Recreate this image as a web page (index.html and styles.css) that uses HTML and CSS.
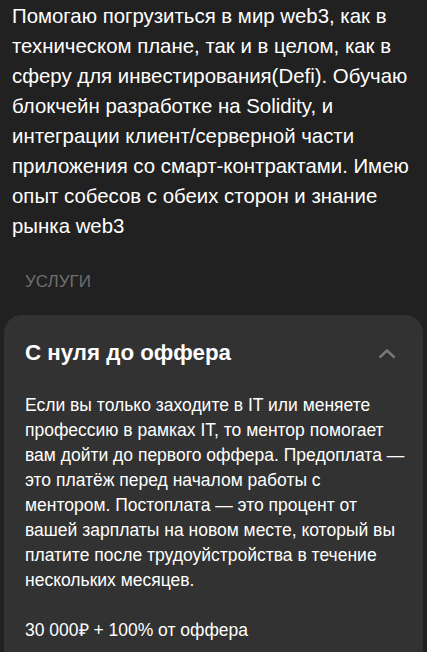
FILE: index.html
```html
<!DOCTYPE html>
<html lang="ru">

<head>
    <meta charset="UTF-8">
    <meta name="viewport" content="width=device-width, initial-scale=1.0">
    <title>Ментор web3</title>
    <link rel="stylesheet" href="styles.css">
</head>

<body>
    <section class="about">
        <p>Помогаю погрузиться в мир web3, как в техническом плане, так и в целом, как в сферу для инвестирования(Defi). Обучаю блокчейн разработке на Solidity, и интеграции клиент/серверной части приложения со смарт-контрактами. Имею опыт собесов с обеих сторон и знание рынка web3</p>
    </section>

    <h2 class="section-title">Услуги</h2>

    <div class="service-card">
        <div class="service-header">
            <h3>С нуля до оффера</h3>
            <svg class="chevron" width="18" height="11" viewBox="0 0 18 11">
                <polyline points="1.5,9.5 9,2.5 16.5,9.5" fill="none" stroke="#787878" stroke-width="2.4" />
            </svg>
        </div>
        <p class="service-text">Если вы только заходите в IT или меняете профессию в рамках IT, то ментор помогает вам дойти до первого оффера. Предоплата — это платёж перед началом работы с ментором. Постоплата — это процент от вашей зарплаты на новом месте, который вы платите после трудоуйстройства в течение нескольких месяцев.</p>
        <p class="service-price">30 000₽ + 100% от оффера</p>
    </div>
</body>

</html>
```

FILE: styles.css
```css
/* General Styles */
body {
    margin: 0;
    font-family: 'Liberation Sans', Arial, sans-serif;
    background-color: #212121;
    color: #FFFFFF;
}

/* About */
.about {
    padding: 1px 12px 0;
}

.about p {
    margin: 0;
    font-size: 20.4px;
    line-height: 30px;
}

/* Section title */
.section-title {
    margin: 31px 0 0;
    padding: 0 25px;
    font-size: 17px;
    font-weight: normal;
    text-transform: uppercase;
    color: #6E6E6E;
}

/* Service card */
.service-card {
    margin: 23px 4px 0;
    padding: 20px 21px 40px;
    background-color: #323232;
    border-radius: 18px;
}

.service-header {
    display: flex;
    justify-content: space-between;
    align-items: center;
}

.service-header h3 {
    margin: 0;
    font-size: 22.3px;
    line-height: 36px;
}

.chevron {
    margin-right: 6px;
}

.service-text,
.service-price {
    margin: 0 -5px 0 0;
    font-size: 17.5px;
    line-height: 25px;
}

.service-text {
    margin-top: 22px;
}

.service-price {
    margin-top: 25px;
}
```
